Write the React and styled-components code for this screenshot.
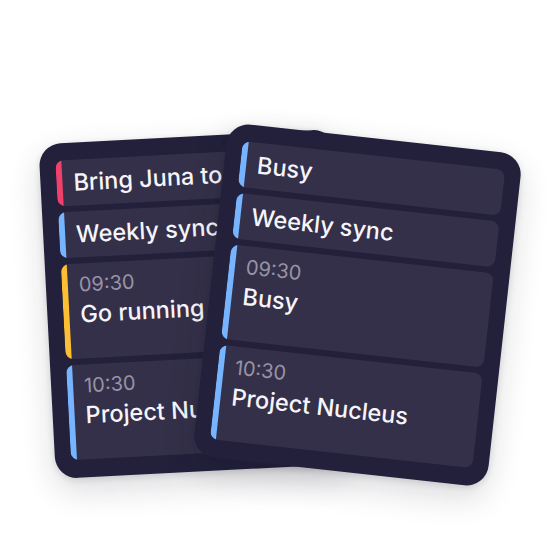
import React from "react";
import styled, { createGlobalStyle } from "styled-components";

const Global = createGlobalStyle`
  html, body { margin: 0; padding: 0; background: #ffffff; }
  body { font-family: Inter, "Liberation Sans", sans-serif; }
`;

const Stage = styled.div`
  width: 560px;
  height: 560px;
  display: grid;
  place-items: center;
  overflow: hidden;
`;

const Card = styled.div`
  grid-area: 1 / 1;
  width: 296px;
  height: 335px;
  box-sizing: border-box;
  padding: 17px 16px 18px;
  border-radius: 22px;
  background: #22203a;
  display: flex;
  flex-direction: column;
  gap: 6px;
  overflow: hidden;
  transform: translate(${(p) => p.$dx}px, ${(p) => p.$dy}px) rotate(${(p) => p.$rot}deg);
  box-shadow: 0 12px 32px rgba(24, 22, 45, 0.16), 0 2px 6px rgba(24, 22, 45, 0.12);
`;

const Row = styled.div`
  position: relative;
  flex: 0 0 ${(p) => (p.$tall ? 95 : 46)}px;
  box-sizing: border-box;
  border-radius: 8px;
  background: #343049;
  overflow: hidden;
  display: flex;
  flex-direction: column;
  justify-content: ${(p) => (p.$tall ? "flex-start" : "center")};
  padding: ${(p) => (p.$tall ? "10px" : "0")} 12px 0 17px;
  &::before {
    content: "";
    position: absolute;
    left: 0;
    top: 0;
    bottom: 0;
    width: 6px;
    background: ${(p) => p.$color};
  }
`;

const Time = styled.div`
  font-size: 20px;
  line-height: 23px;
  font-weight: 400;
  color: #9893a6;
  white-space: nowrap;
`;

const Title = styled.div`
  font-size: 23.5px;
  line-height: 28px;
  font-weight: 500;
  color: #f6f5fa;
  white-space: nowrap;
  margin-top: ${(p) => (p.$afterTime ? "4px" : "0")};
`;

const RED = "#f1416b";
const BLUE = "#76b4ff";
const YELLOW = "#fcbe33";

const backEvents = [
  { color: RED, title: "Bring Juna to school" },
  { color: BLUE, title: "Weekly sync" },
  { color: YELLOW, time: "09:30", title: "Go running" },
  { color: BLUE, time: "10:30", title: "Project Nucleus" },
];

const frontEvents = [
  { color: BLUE, title: "Busy" },
  { color: BLUE, title: "Weekly sync" },
  { color: BLUE, time: "09:30", title: "Busy" },
  { color: BLUE, time: "10:30", title: "Project Nucleus" },
];

function Widget({ events, dx, dy, rot }) {
  return (
    <Card $dx={dx} $dy={dy} $rot={rot}>
      {events.map((e, i) => (
        <Row key={i} $color={e.color} $tall={!!e.time}>
          {e.time && <Time>{e.time}</Time>}
          <Title $afterTime={!!e.time}>{e.title}</Title>
        </Row>
      ))}
    </Card>
  );
}

export default function App() {
  return (
    <>
      <Global />
      <Stage>
        <Widget events={backEvents} dx={-85} dy={23.5} rot={-3} />
        <Widget events={frontEvents} dx={77.5} dy={24.5} rot={6.3} />
      </Stage>
    </>
  );
}
